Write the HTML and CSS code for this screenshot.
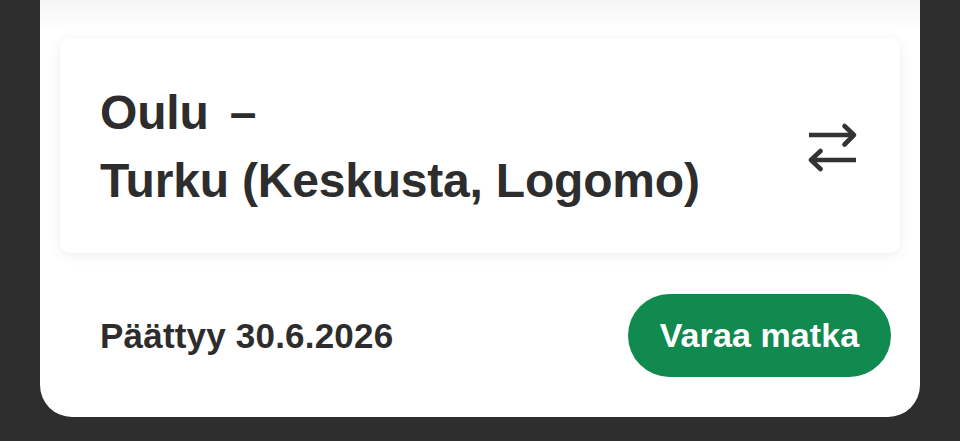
FILE: index.html
```html
<!DOCTYPE html>
<html lang="fi">
<head>
<meta charset="utf-8">
<title>Matka</title>
<link rel="stylesheet" href="styles.css">
</head>
<body>
<div class="card">
  <div class="route">
    <div class="route-text">
      <div class="line">Oulu <span class="dash">–</span></div>
      <div class="line">Turku (Keskusta, Logomo)</div>
    </div>
    <svg class="swap" width="52" height="50" viewBox="0 0 52 50" fill="none" stroke="#333333" stroke-width="4.6" stroke-linecap="round" stroke-linejoin="round">
      <path d="M3 13 H48" stroke-linecap="butt"/>
      <path d="M38.5 4 L48 13 L38.5 22.5"/>
      <path d="M50 38 H5" stroke-linecap="butt"/>
      <path d="M14.5 29 L5 38 L14.5 47"/>
    </svg>
  </div>
  <div class="footer">
    <div class="ends">Päättyy 30.6.2026</div>
    <button class="book">Varaa matka</button>
  </div>
</div>
</body>
</html>
```
FILE: styles.css
```css
html, body {
  margin: 0;
  padding: 0;
}
body {
  background: #2e2e2e;
  width: 960px;
  height: 441px;
  overflow: hidden;
  font-family: "Liberation Sans", Arial, sans-serif;
  color: #2d2d2d;
}
.card {
  margin: 0 40px;
  width: 880px;
  box-sizing: border-box;
  padding: 38px 0 0 0;
  background: linear-gradient(#f5f5f5 0px, #fbfbfb 18px, #ffffff 32px);
  border-radius: 0 0 32px 32px;
}
.route {
  margin: 0 20px;
  background: #ffffff;
  border-radius: 10px;
  box-shadow: 0 2px 14px rgba(0, 0, 0, 0.07);
  padding: 41px 42px 38px 40px;
  display: flex;
  align-items: center;
  justify-content: space-between;
}
.route-text {
  font-weight: 700;
  font-size: 48px;
  line-height: 68px;
  letter-spacing: -0.2px;
}
.dash {
  margin-left: 8px;
}
.swap {
  display: block;
  flex: none;
}
.footer {
  display: flex;
  align-items: center;
  justify-content: space-between;
  padding: 41px 29px 40px 60px;
}
.ends {
  font-weight: 700;
  font-size: 35px;
  letter-spacing: 0.2px;
}
.book {
  font-family: "Liberation Sans", Arial, sans-serif;
  font-weight: 700;
  font-size: 34px;
  color: #ffffff;
  background: #108a4f;
  border: none;
  border-radius: 42px;
  width: 263px;
  height: 83px;
  padding: 0;
  letter-spacing: 0.1px;
}
```
